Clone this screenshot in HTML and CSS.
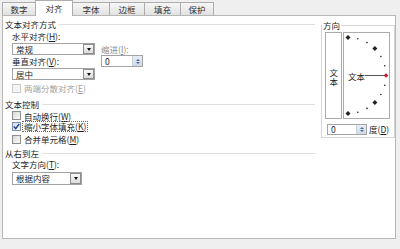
FILE: index.html
```html
<!DOCTYPE html>
<html lang="zh-CN">
<head>
<meta charset="utf-8">
<title>设置单元格格式 - 对齐</title>
<link rel="stylesheet" href="styles.css">
</head>
<body>
<div class="dialog">
  <div class="tabs">
    <div class="tab t1">数字</div>
    <div class="tab t2 active">对齐</div>
    <div class="tab t3">字体</div>
    <div class="tab t4">边框</div>
    <div class="tab t5">填充</div>
    <div class="tab t6">保护</div>
  </div>
  <div class="panel">
    <div class="left">
      <div class="legend"><span>文本对齐方式</span><i></i></div>
      <div class="align-grid">
        <div class="lbl">水平对齐(<u>H</u>):</div>
        <div></div>
        <div class="select">常规<span class="drop"></span></div>
        <div class="lbl dim indent-lbl">缩进(<u>I</u>):</div>
        <div class="lbl">垂直对齐(<u>V</u>):</div>
        <div class="spin">0<span class="spin-btn"><b class="up"></b><b class="down"></b></span></div>
        <div class="select">居中<span class="drop"></span></div>
        <div></div>
      </div>
      <div class="chk disabled first"><span class="box"></span><span>两端分散对齐(<u>E</u>)</span></div>
      <div class="legend gap4"><span>文本控制</span><i></i></div>
      <div class="chk"><span class="box"></span><span>自动换行(<u>W</u>)</span></div>
      <div class="chk"><span class="box checked"><svg width="7" height="7" viewBox="0 0 7 7"><path d="M0.8 3.6 L2.7 5.6 L6.2 1" fill="none" stroke="#23408e" stroke-width="1.4"/></svg></span><span class="focus">缩小字体填充(<u>K</u>)</span></div>
      <div class="chk last"><span class="box"></span><span>合并单元格(<u>M</u>)</span></div>
      <div class="legend gap2"><span>从右到左</span><i></i></div>
      <div class="lbl sub">文字方向(<u>T</u>):</div>
      <div class="select wide">根据内容<span class="drop"></span></div>
    </div>
    <fieldset class="dir">
      <legend>方向</legend>
      <div class="dir-row">
        <div class="vtext">文本</div>
        <div class="dial">
          <svg class="dial-art" width="45" height="85" viewBox="0 0 45 85">
            <g fill="#222">
              <polygon points="4,2 6.5,4.5 4,7 1.5,4.5"/>
              <circle cx="13.8" cy="5.8" r="0.8"/>
              <circle cx="23" cy="9.6" r="0.8"/>
              <polygon points="30.9,13.1 33.4,15.6 30.9,18.1 28.4,15.6"/>
              <circle cx="36.9" cy="23.5" r="0.8"/>
              <circle cx="40.7" cy="32.7" r="0.8"/>
              <circle cx="40.7" cy="52.3" r="0.8"/>
              <circle cx="36.9" cy="61.5" r="0.8"/>
              <polygon points="30.9,66.9 33.4,69.4 30.9,71.9 28.4,69.4"/>
              <circle cx="23" cy="75.4" r="0.8"/>
              <circle cx="13.8" cy="79.2" r="0.8"/>
              <polygon points="4,78 6.5,80.5 4,83 1.5,80.5"/>
            </g>
            <line x1="21" y1="42.5" x2="40" y2="42.5" stroke="#555" stroke-width="1"/>
            <polygon points="42,40.2 44.3,42.5 42,44.8 39.7,42.5" fill="#c0182c"/>
          </svg>
          <span class="dial-text">文本</span>
        </div>
      </div>
      <div class="deg-row">
        <div class="spin small">0<span class="spin-btn"><b class="up"></b><b class="down"></b></span></div>
        <span class="deg">度(<u>D</u>)</span>
      </div>
    </fieldset>
  </div>
</div>
</body>
</html>
```

FILE: styles.css
```css
* { box-sizing: border-box; margin: 0; padding: 0; }
html, body { width: 400px; height: 249px; overflow: hidden; }
body {
  background: #efefef;
  font-family: "Noto Sans CJK SC", "Liberation Sans", sans-serif;
  font-size: 8.5px;
  color: #1e1e1e;
}
u { text-decoration: underline; text-underline-offset: 1px; }

.dialog { display: flex; flex-direction: column; height: 249px; }

/* tabs */
.tabs { display: flex; align-items: flex-end; height: 15px; padding-left: 2px; }
.tab {
  height: 13px;
  margin-right: -1px;
  border: 1px solid #adadad;
  border-bottom: none;
  background: linear-gradient(#f6f6f6, #e2e2e2);
  display: flex; align-items: center; justify-content: center;
  line-height: 1;
  color: #333;
}
.t1 { width: 34px; }
.t2 { width: 38px; }
.t3 { width: 38px; }
.t4 { width: 36px; }
.t5 { width: 37px; }
.t6 { width: 34px; }
.tab.active {
  height: 16px;
  margin-bottom: -1px;
  background: #fff;
  position: relative;
  z-index: 1;
}

/* panel */
.panel {
  margin-left: 2px;
  width: 394px;
  height: 224px;
  background: #fff;
  border: 1px solid #b7b7b7;
  display: flex;
  gap: 6px;
}
.left { width: 312px; padding: 2px 0 0 2px; display: flex; flex-direction: column; }

.legend { display: flex; align-items: center; height: 12px; }
.legend i { flex: 1; height: 1px; background: #dedede; margin-left: 3px; }
.gap4 { margin-top: 4px; }
.gap2 { margin-top: 2px; }

.align-grid {
  display: grid;
  grid-template-columns: 83px 42px;
  grid-template-rows: 12px 13px 12px 13px;
  column-gap: 6px;
  margin-left: 7px;
}
.lbl { line-height: 12px; white-space: nowrap; }
.dim { color: #8c8c8c; }
.indent-lbl { align-self: end; line-height: 11px; }
.sub { margin-left: 7px; line-height: 11px; }

.select {
  height: 12px;
  margin-top: 1px;
  border: 1px solid #a3a3a3;
  background: #fff;
  display: flex; align-items: center;
  padding-left: 3px;
  line-height: 1;
}
.select.wide { width: 70px; margin-left: 7px; margin-top: 2px; height: 13px; }
.drop {
  margin-left: auto;
  width: 11px; height: 10px;
  border: 1px solid #8d8d8d;
  background: linear-gradient(#f8f8f8, #dcdcdc);
  display: flex; align-items: center; justify-content: center;
}
.select.wide .drop { height: 11px; }
.drop::after {
  content: "";
  border-left: 2.5px solid transparent;
  border-right: 2.5px solid transparent;
  border-top: 3px solid #111;
}

.spin {
  height: 12px;
  border: 1px solid #a3a3a3;
  background: #fff;
  display: flex; align-items: center;
  padding-left: 3px;
  line-height: 1;
}
.spin-btn {
  margin-left: auto;
  width: 10px; height: 10px;
  background: linear-gradient(#e9eef5, #cfd9e6);
  border-left: 1px solid #c9d2de;
  display: flex; flex-direction: column; align-items: center; justify-content: center; gap: 1px;
}
.spin-btn b { display: block; border-left: 2px solid transparent; border-right: 2px solid transparent; }
.spin-btn .up { border-bottom: 2px solid #4a6a9a; }
.spin-btn .down { border-top: 2px solid #4a6a9a; }

.chk { display: flex; align-items: center; height: 11px; margin-left: 7px; white-space: nowrap; }
.chk.first { margin-top: 2px; height: 12px; }
.chk.last { margin-top: 1px; height: 12px; }
.box {
  width: 9px; height: 9px;
  border: 1px solid #8e8f8f;
  background: linear-gradient(135deg, #d8d8d8, #fbfbfb);
  margin-right: 3px;
  display: flex; align-items: center; justify-content: center;
  flex: none;
}
.box.checked { background: linear-gradient(135deg, #d5dfee, #f7f9fc); border-color: #7f8fa8; }
.disabled { color: #a2a2a2; }
.disabled .box { border-color: #c9c9c9; background: #f4f4f4; }
.focus { border: 1px dotted #666; padding: 0 1px; margin-left: -2px; line-height: 9px; }

/* direction */
.dir {
  width: 74px;
  height: 118px;
  margin-top: 4px;
  border: 1px solid #d6d6d6;
  padding: 2px 4px 0 3px;
  min-width: 0;
}
.dir legend { line-height: 10px; padding: 0 1px; margin-left: -3px; }
.dir-row { display: flex; gap: 1px; height: 87px; }
.vtext {
  width: 17px;
  border: 1px solid #ababab;
  writing-mode: vertical-rl;
  text-orientation: upright;
  display: flex; align-items: center; justify-content: center;
  padding-top: 3px;
  line-height: 1;
}
.dial {
  width: 47px;
  border: 1px solid #ababab;
  display: grid;
}
.dial-art, .dial-text { grid-area: 1 / 1; }
.dial-text { align-self: center; margin-left: 4px; margin-top: 1px; line-height: 1; }
.deg-row { display: flex; align-items: center; margin-top: 4px; padding-left: 2px; }
.spin.small { width: 40px; height: 11px; }
.spin.small .spin-btn { height: 9px; }
.deg { margin-left: 2px; }
```
